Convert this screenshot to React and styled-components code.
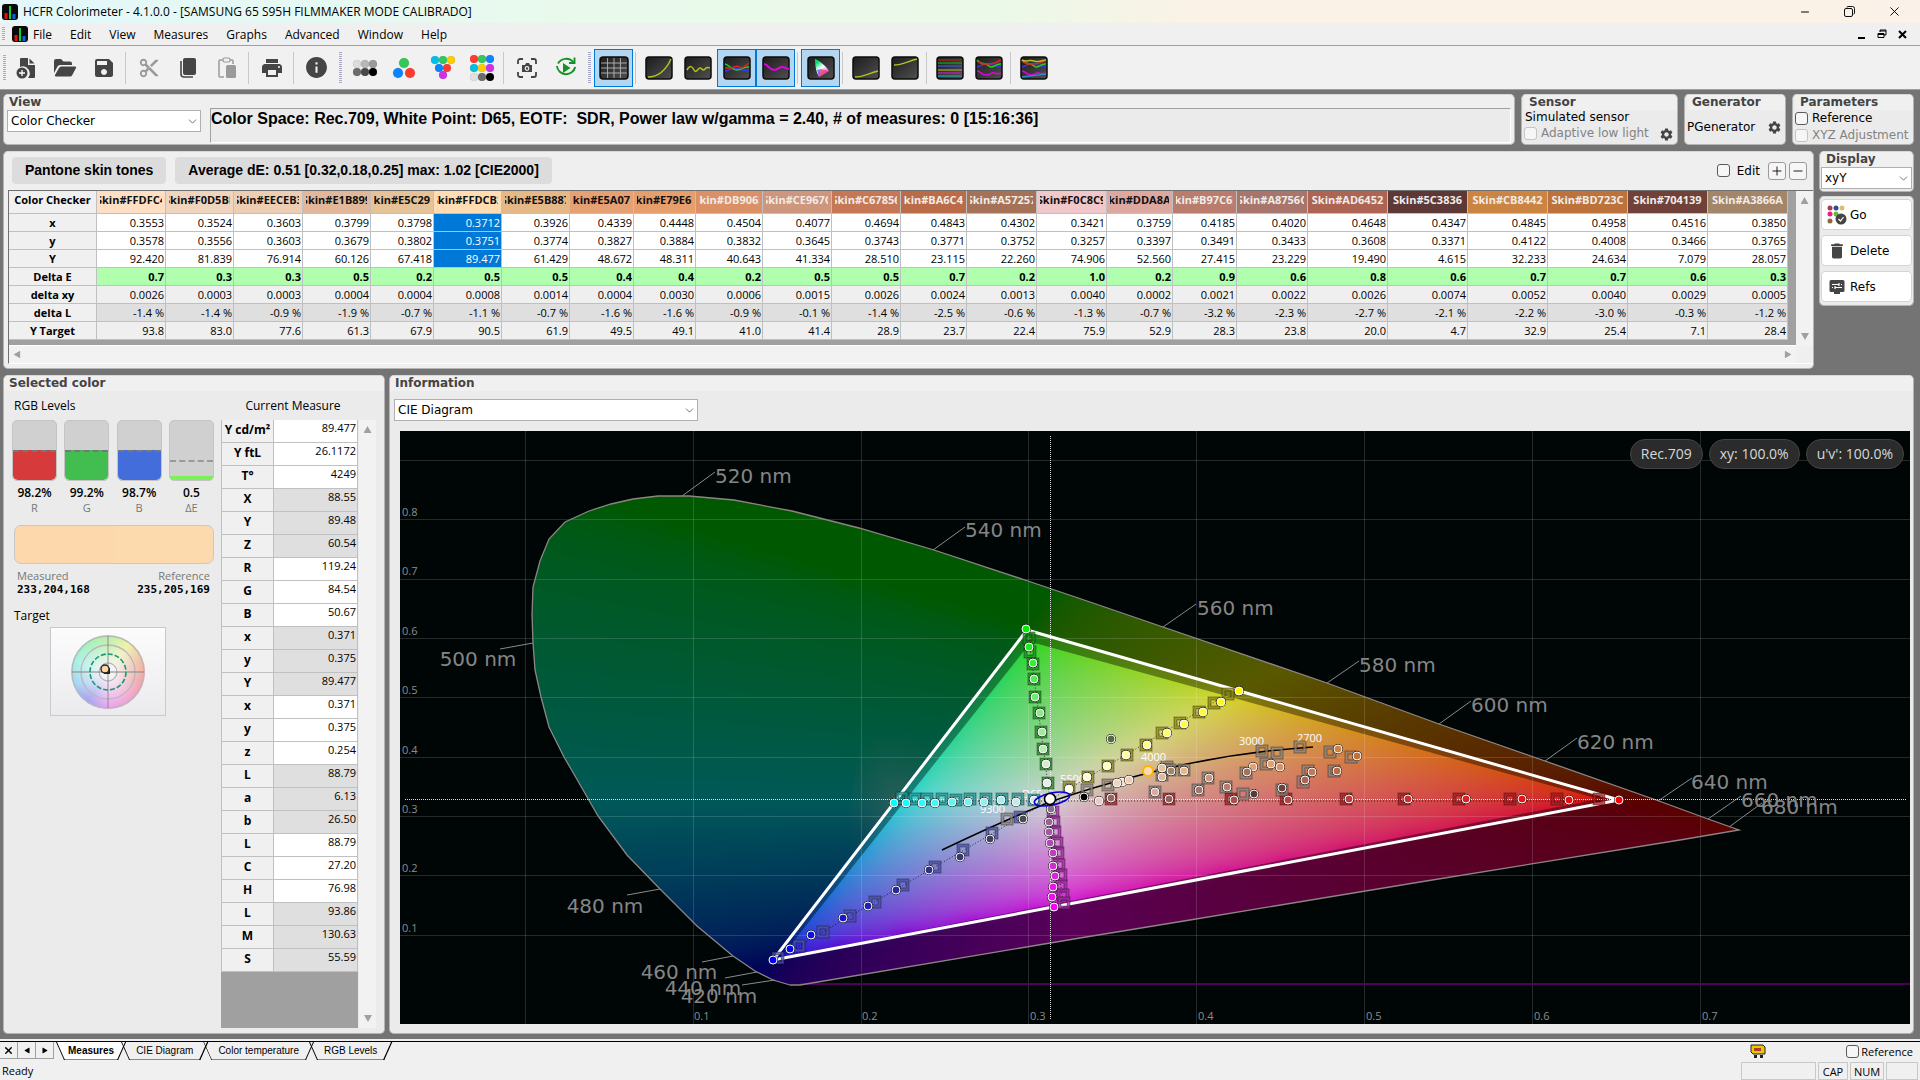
import React, {useState} from 'react';
import styled, {createGlobalStyle} from 'styled-components';
import {ChevronDown, Minus, Plus, X} from 'lucide-react';
import {MdSave, MdContentCut, MdPrint, MdInfo, MdDelete, MdSettings} from 'react-icons/md';

//--------------Data---------------
const menus = ['File', 'Edit', 'View', 'Measures', 'Graphs', 'Advanced', 'Window', 'Help'];

const patches = [
    ['Skin#FFDFC4', 69, '0.3553', '0.3578', '92.420', '0.7', '0.0026', '-1.4 %', '93.8'],
    ['Skin#F0D5BE', 68, '0.3524', '0.3556', '81.839', '0.3', '0.0003', '-1.4 %', '83.0'],
    ['Skin#EECEB3', 69, '0.3603', '0.3603', '76.914', '0.3', '0.0003', '-0.9 %', '77.6'],
    ['Skin#E1B899', 68, '0.3799', '0.3679', '60.126', '0.5', '0.0004', '-1.9 %', '61.3'],
    ['Skin#E5C298', 63, '0.3798', '0.3802', '67.418', '0.2', '0.0004', '-0.7 %', '67.9'],
    ['Skin#FFDCB2', 68, '0.3712', '0.3751', '89.477', '0.5', '0.0008', '-1.1 %', '90.5'],
    ['Skin#E5B887', 68, '0.3926', '0.3774', '61.429', '0.5', '0.0014', '-0.7 %', '61.9'],
    ['Skin#E5A073', 64, '0.4339', '0.3827', '48.672', '0.4', '0.0004', '-1.6 %', '49.5'],
    ['Skin#E79E6D', 62, '0.4448', '0.3884', '48.311', '0.4', '0.0030', '-1.6 %', '49.1'],
    ['Skin#DB9065', 67, '0.4504', '0.3832', '40.643', '0.2', '0.0006', '-0.9 %', '41.0'],
    ['Skin#CE967C', 69, '0.4077', '0.3645', '41.334', '0.5', '0.0015', '-0.1 %', '41.4'],
    ['Skin#C67856', 69, '0.4694', '0.3743', '28.510', '0.5', '0.0026', '-1.4 %', '28.9'],
    ['Skin#BA6C49', 66, '0.4843', '0.3771', '23.115', '0.7', '0.0024', '-2.5 %', '23.7'],
    ['Skin#A57257', 70, '0.4302', '0.3752', '22.260', '0.2', '0.0013', '-0.6 %', '22.4'],
    ['Skin#F0C8C9', 70, '0.3421', '0.3257', '74.906', '1.0', '0.0040', '-1.3 %', '75.9'],
    ['Skin#DDA8A0', 66, '0.3759', '0.3397', '52.560', '0.2', '0.0002', '-0.7 %', '52.9'],
    ['Skin#B97C6D', 64, '0.4185', '0.3491', '27.415', '0.9', '0.0021', '-3.2 %', '28.3'],
    ['Skin#A8756C', 71, '0.4020', '0.3433', '23.229', '0.6', '0.0022', '-2.3 %', '23.8'],
    ['Skin#AD6452', 80, '0.4648', '0.3608', '19.490', '0.8', '0.0026', '-2.7 %', '20.0'],
    ['Skin#5C3836', 80, '0.4347', '0.3371', '4.615', '0.6', '0.0074', '-2.1 %', '4.7'],
    ['Skin#CB8442', 80, '0.4845', '0.4122', '32.233', '0.7', '0.0052', '-2.2 %', '32.9'],
    ['Skin#BD723C', 80, '0.4958', '0.4008', '24.634', '0.7', '0.0040', '-3.0 %', '25.4'],
    ['Skin#704139', 80, '0.4516', '0.3466', '7.079', '0.6', '0.0029', '-0.3 %', '7.1'],
    ['Skin#A3866A', 80, '0.3850', '0.3765', '28.057', '0.3', '0.0005', '-1.2 %', '28.4'],
];
const gridRows = [
    {label: 'x', bg: '#fff'},
    {label: 'y', bg: '#fff'},
    {label: 'Y', bg: '#fff'},
    {label: 'Delta E', bg: '#afffaf', bold: true},
    {label: 'delta xy', bg: '#efefef'},
    {label: 'delta L', bg: '#dfdfdf'},
    {label: 'Y Target', bg: '#efefef'},
];
const measures = [
    ['Y cd/m²', '89.477'], ['Y ftL', '26.1172'], ['T°', '4249'],
    ['X', '88.55'], ['Y', '89.48'], ['Z', '60.54'],
    ['R', '119.24'], ['G', '84.54'], ['B', '50.67'],
    ['x', '0.371'], ['y', '0.375'], ['Y', '89.477'],
    ['x', '0.371'], ['y', '0.375'], ['z', '0.254'],
    ['L', '88.79'], ['a', '6.13'], ['b', '26.50'],
    ['L', '88.79'], ['C', '27.20'], ['H', '76.98'],
    ['L', '93.86'], ['M', '130.63'], ['S', '55.59'],
];
const levels = [
    {label: 'R', value: '98.2%', color: '#d63a3a'},
    {label: 'G', value: '99.2%', color: '#42bd50'},
    {label: 'B', value: '98.7%', color: '#436ddb'},
];

//--------------Chart data---------------
const LOCUS = 'M790 985 L773 980 L755 971 L733 956 L697 926 L660 889 L627 855 L598 816 L571 769 L564 757 L549 727 L541 697 L535 670 L533 643 L532 615 L533 587 L540 561 L549 539 L565 522 L589 511 L611 504 L633 499 L658 496 L689 496 L734 500 L792 511 L859 528 L934 550 L1028 581 L1090 602 L1163 627 L1327 683 L1439 724 L1545 761 L1659 801 L1708 819 L1739 830 L1680 840 L1420 882 L1190 920 L1080 938 L800 985 Z';
const GAMUT = 'M1027 630 L1619 800 L773 960 Z';
const INNER = 'M1031 642 L1599 799 L781 957 Z';

const waves = [
    ['520 nm', 682, 496, 715, 472, 715, 483],
    ['540 nm', 933, 550, 965, 527, 965, 537],
    ['560 nm', 1163, 627, 1196, 604, 1197, 615],
    ['580 nm', 1327, 683, 1359, 661, 1359, 672],
    ['600 nm', 1439, 724, 1471, 701, 1471, 712],
    ['620 nm', 1545, 761, 1577, 738, 1577, 749],
    ['640 nm', 1658, 801, 1692, 778, 1691, 789],
    ['660 nm', 1708, 819, 1741, 796, 1741, 807],
    ['680 nm', 1729, 827, 1762, 803, 1761, 814],
    ['500 nm', 533, 643, 500, 649, 478, 666],
    ['480 nm', 660, 889, 627, 895, 605, 913],
    ['460 nm', 733, 956, 702, 962, 679, 979],
    ['440 nm', 757, 972, 725, 978, 703, 995],
    ['420 nm', 775, 980, 742, 985, 719, 1003],
];
const temps = [['9300', 980, 813], ['D65', 1022, 798], ['5500', 1060, 783], ['4000', 1141, 761], ['3000', 1239, 745], ['2700', 1297, 742]];

const sweeps = [
    {
        from: [235, 235, 235], to: [0, 240, 0], square: '#1c8a1c',
        dots: [[1047, 783], [1046, 764], [1043, 749], [1042, 732], [1040, 713], [1035, 697], [1034, 679], [1033, 663], [1029, 647], [1026, 629]],
        squares: [[1029, 638], [1030, 652], [1033, 664], [1034, 679], [1035, 697], [1039, 713], [1041, 732], [1043, 749], [1046, 764], [1048, 783]],
    },
    {
        from: [255, 255, 240], to: [255, 250, 0], square: '#8c8417',
        dots: [[1069, 789], [1087, 777], [1107, 766], [1126, 755], [1147, 745], [1167, 733], [1184, 724], [1203, 712], [1221, 702], [1239, 691]],
        squares: [[1228, 694], [1214, 703], [1199, 712], [1180, 723], [1162, 733], [1146, 745], [1127, 755], [1108, 766], [1088, 777], [1069, 787]],
    },
    {
        from: [215, 232, 232], to: [0, 255, 255], square: '#219494',
        dots: [[1034, 800], [1016, 802], [1001, 800], [984, 802], [968, 802], [952, 802], [935, 803], [922, 803], [906, 803], [894, 803]],
        squares: [[902, 798], [915, 799], [927, 799], [942, 799], [956, 800], [970, 799], [986, 799], [1002, 799], [1018, 799], [1034, 800]],
    },
    {
        from: [140, 110, 140], to: [255, 0, 255], square: '#9c2a9c',
        dots: [[1051, 809], [1049, 822], [1049, 832], [1050, 843], [1053, 853], [1053, 866], [1055, 876], [1053, 887], [1052, 897], [1054, 907]],
        squares: [[1053, 812], [1054, 822], [1055, 832], [1057, 843], [1058, 853], [1059, 865], [1061, 875], [1061, 886], [1063, 895], [1064, 903]],
    },
    {
        from: [72, 72, 82], to: [0, 0, 255], square: '#4a50a0',
        dots: [[1023, 819], [990, 839], [960, 857], [929, 870], [896, 890], [868, 906], [843, 918], [811, 935], [790, 949], [773, 960]],
        squares: [[778, 958], [799, 946], [823, 932], [850, 916], [875, 902], [903, 885], [935, 867], [963, 850], [992, 833], [1020, 817]],
    },
    {
        from: [150, 100, 100], to: [255, 0, 0], square: '#a01c24',
        dots: [[1111, 798], [1169, 799], [1234, 800], [1288, 800], [1349, 799], [1408, 799], [1466, 799], [1522, 799], [1569, 800], [1619, 800]],
        squares: [[1111, 799], [1169, 799], [1231, 799], [1286, 799], [1346, 799], [1404, 799], [1459, 799], [1510, 799], [1557, 799], [1599, 799]],
    },
];
const skins = [
    [1111, 739, '#556b3a'], [1084, 797, '#000'], [1099, 801, '#f0c8c9'], [1122, 782, '#ffdfc4'], [1117, 783, '#f0d5be'],
    [1129, 780, '#eeceb3'], [1162, 768, '#e5c298'], [1162, 777, '#e1b899'], [1171, 771, '#a3866a'], [1184, 771, '#e5b887'],
    [1155, 792, '#dda8a0'], [1199, 790, '#a8756c'], [1209, 778, '#ce967c'], [1227, 787, '#b97c6d'], [1254, 794, '#5c3836'],
    [1282, 788, '#704139'], [1253, 767, '#e5a073'], [1247, 772, '#a57257'], [1271, 764, '#e79e6d'], [1280, 767, '#db9065'],
    [1305, 780, '#ad6452'], [1312, 772, '#c67856'], [1337, 771, '#ba6c49'], [1338, 749, '#cb8442'], [1357, 756, '#bd723c'],
];
const targets = [
    [1262, 751], [1277, 753], [1300, 747], [1330, 752], [1351, 757], [1334, 771], [1308, 771], [1303, 782], [1282, 790],
    [1266, 764], [1246, 773], [1243, 794], [1226, 787], [1198, 790], [1167, 767], [1162, 775], [1155, 792], [1108, 785],
    [1087, 790], [1007, 819], [1170, 770], [1184, 770], [1208, 778],
];

//----------------Colour of the chart at a point----------------
const colorAt = (px, py) => {
    const [gx, gy, rx, ry, bx, by] = [1027, 630, 1619, 800, 773, 960];
    const det = (ry - by) * (gx - bx) + (bx - rx) * (gy - by);
    const r = ((by - gy) * (px - bx) + (gx - bx) * (py - by)) / det;
    const g = ((ry - by) * (px - bx) + (bx - rx) * (py - by)) / det;
    const b = 1 - r - g;
    const lin = [r / 0.213, g / 0.382, b / 0.405].map((v) => Math.max(0, v));
    const top = Math.max(...lin);
    return `rgb(${lin.map((v) => Math.round(212 * Math.pow(v / top, 0.46))).join(',')})`;
};
const CELL = 12;
const cells = [];
for (let x = 510; x < 1764; x += CELL) {
    for (let y = 474; y < 1008; y += CELL) {
        cells.push({x, y, fill: colorAt(x + CELL / 2, y + CELL / 2)});
    }
}
const mix = (from, to, t) => `rgb(${from.map((v, i) => Math.round(v + (to[i] - v) * t)).join(',')})`;

const Dot = ({x, y, fill}) => (
    <g>
        <circle cx={x} cy={y} r="5" fill="#222" />
        <circle cx={x} cy={y} r="4" fill={fill} stroke="#fff" strokeWidth="1" />
    </g>
);
const Square = ({x, y, color}) => (
    <g fill="none">
        <rect x={x - 4.5} y={y - 4.5} width="9" height="9" stroke={color} strokeWidth="3" opacity="0.75" />
        <rect x={x - 6} y={y - 6} width="12" height="12" stroke="#000" strokeOpacity="0.35" />
        <rect x={x - 3} y={y - 3} width="6" height="6" stroke="#000" strokeOpacity="0.35" />
    </g>
);

const CieChart = () => (
    <Chart viewBox="400 431 1510 593" preserveAspectRatio="none" role="img" aria-label="CIE Diagram">
        <defs>
            <clipPath id="locus"><path d={LOCUS} /></clipPath>
            <filter id="soften" x="0" y="0" width="1" height="1" colorInterpolationFilters="sRGB">
                <feGaussianBlur stdDeviation="6" />
            </filter>
            <radialGradient id="glow">
                <stop offset="0" stopColor="#8a6a60" stopOpacity="0.7" />
                <stop offset="1" stopColor="#6a5a50" stopOpacity="0" />
            </radialGradient>
        </defs>
        <rect x="400" y="431" width="1510" height="593" fill="#000606" />
        <g clipPath="url(#locus)">
            <g filter="url(#soften)">
                {cells.map((c) => <rect key={`${c.x}-${c.y}`} x={c.x} y={c.y} width={CELL + 1} height={CELL + 1} fill={c.fill} />)}
            </g>
            <path d={`${LOCUS} ${GAMUT}`} fillRule="evenodd" fill="#000" fillOpacity="0.58" />
            <path d={`${GAMUT} ${INNER}`} fillRule="evenodd" fill="#000" fillOpacity="0.4" />
            <path d="M840 874 L860 740 L950 728 L926 756 Z" fill="url(#glow)" opacity="0.4" />
        </g>
        <g stroke="#fff" strokeOpacity="0.14">
            {[525, 693, 861, 1028, 1196, 1364, 1532, 1700].map((x) => <line key={x} x1={x + 0.5} x2={x + 0.5} y1="431" y2="1024" />)}
            {[460, 519, 579, 638, 697, 757, 816, 875, 935].map((y) => <line key={y} x1="400" x2="1910" y1={y + 0.5} y2={y + 0.5} />)}
        </g>
        <line x1="800" x2="1910" y1="984" y2="984" stroke="#4e0058" strokeWidth="2" />
        <path d={LOCUS} fill="none" stroke="#8c8484" strokeWidth="1.3" />
        <g stroke="#8a8a8a">
            {waves.map(([name, x1, y1, x2, y2]) => <line key={name} x1={x1} y1={y1} x2={x2} y2={y2} />)}
        </g>
        <path d={GAMUT} fill="none" stroke="#fff" strokeWidth="3" />
        <g stroke="#fff" strokeOpacity="0.85" strokeDasharray="1 1">
            <line x1="1050.5" x2="1050.5" y1="436" y2="1020" />
            <line x1="405" x2="1906" y1="799.5" y2="799.5" />
        </g>
        <g stroke="#000" strokeOpacity="0.7" strokeDasharray="1 2" fill="none">
            <path d="M894 801 L1600 801" />
            <path d="M1029 640 L1050 800 L1063 903" />
            <path d="M778 958 L1050 800 L1228 694" />
        </g>
        <path d="M942 850 Q1000 822 1050 802 Q1110 781 1187 764 Q1250 751 1313 747" fill="none" stroke="#000" strokeWidth="1.6" />
        <TempText>
            {temps.map(([name, x, y]) => <text key={name} x={x} y={y}>{name}</text>)}
        </TempText>
        {sweeps.map((s) => s.squares.map(([x, y]) => <Square key={`${x}-${y}`} x={x} y={y} color={s.square} />))}
        {targets.map(([x, y]) => <Square key={`${x}-${y}`} x={x} y={y} color="#8a8078" />)}
        {sweeps.map((s) => s.dots.map(([x, y], i) => <Dot key={`${x}-${y}`} x={x} y={y} fill={mix(s.from, s.to, i / 9)} />))}
        {skins.map(([x, y, c]) => <Dot key={`${x}-${y}`} x={x} y={y} fill={c} />)}
        <circle cx="1148" cy="771" r="5" fill="#ffdcb0" stroke="#ffb400" strokeWidth="2" />
        <ellipse cx="1052" cy="799" rx="18" ry="6" transform="rotate(-12 1052 799)" fill="none" stroke="#0000e0" strokeWidth="1.6" />
        <circle cx="1050" cy="799" r="5.5" fill="#fff" stroke="#000" strokeWidth="1.6" />
        <WaveText>
            {waves.map(([name, , , , , x, y], i) => <text key={name} x={x} y={y} textAnchor={i > 8 ? 'middle' : 'start'}>{name}</text>)}
        </WaveText>
        <AxisText>
            {['0.8', '0.7', '0.6', '0.5', '0.4', '0.3', '0.2', '0.1'].map((n, i) => <text key={n} x="402" y={516 + Math.round(i * 59.4)}>{n}</text>)}
            {['0.1', '0.2', '0.3', '0.4', '0.5', '0.6', '0.7'].map((n, i) => <text key={n} x={694 + i * 168} y="1020">{n}</text>)}
        </AxisText>
    </Chart>
);

//----------------Icons----------------
const AppIcon = () => (
    <svg width="16" height="16" viewBox="0 0 16 16">
        <rect width="16" height="16" rx="3" fill="#0a0a0a" />
        <path d="M4 9v6" stroke="#e01010" strokeWidth="3" />
        <path d="M8 2v13" stroke="#10d030" strokeWidth="2" />
        <path d="M12 10v5" stroke="#1060e0" strokeWidth="3" />
    </svg>
);
const NewIcon = () => (
    <svg width="20" height="22" viewBox="0 0 20 22" fill="#454545">
        <path d="M5 1h7v7h7v12a1 1 0 0 1-1 1h-6a7 7 0 0 0-8-11V2a1 1 0 0 1 1-1z" />
        <path d="M13.500 1.500l5 5h-5z" />
        <circle cx="6" cy="16" r="5.500" />
        <path d="M6 13v6M3 16h6" stroke="#fff" strokeWidth="1.300" />
    </svg>
);
const FolderIcon = () => (
    <svg width="24" height="20" viewBox="0 0 24 20" fill="#454545">
        <path d="M1 3a2 2 0 0 1 2-2h5l2.500 2.500H17a2 2 0 0 1 2 2V7H7a3 3 0 0 0-2.500 1.500L1 15z" />
        <path d="M7.500 8.500H22a1 1 0 0 1 1 1.500l-4 7.500a2 2 0 0 1-1.800 1H3a1 1 0 0 1-1-1.500l4-7a2 2 0 0 1 1.500-1z" />
    </svg>
);
const CopyIcon = () => (
    <svg width="18" height="22" viewBox="0 0 18 22">
        <rect x="4" y="1" width="13" height="17" rx="2" fill="#454545" />
        <path d="M2 4v13a3 3 0 0 0 3 3h9" fill="none" stroke="#454545" strokeWidth="1.600" />
    </svg>
);
const PasteIcon = () => (
    <svg width="20" height="22" viewBox="0 0 20 22">
        <path d="M6 3H3a1 1 0 0 0-1 1v15a1 1 0 0 0 1 1h4M13 3h2a1 1 0 0 1 1 1v3" fill="none" stroke="#9a9a9a" strokeWidth="1.500" />
        <rect x="6" y="1" width="7" height="4" rx="1.500" fill="#f0f0f0" stroke="#9a9a9a" strokeWidth="1.200" />
        <rect x="9" y="8" width="10" height="13" rx="1.500" fill="#9a9a9a" />
    </svg>
);
const DotsIcon = ({dots, r = 4}) => (
    <svg width="26" height="26" viewBox="0 0 26 26">
        {dots.map(([x, y, c]) => <circle key={`${x}-${y}`} cx={x} cy={y} r={r} fill={c} stroke="#0002" strokeWidth="0.500" />)}
    </svg>
);
const CameraIcon = () => (
    <svg width="22" height="22" viewBox="0 0 22 22" fill="none" stroke="#454545" strokeWidth="1.800">
        <path d="M2 7V4a2 2 0 0 1 2-2h3M15 2h3a2 2 0 0 1 2 2v3M20 15v3a2 2 0 0 1-2 2h-3M7 20H4a2 2 0 0 1-2-2v-3" />
        <path d="M6 8h3l1-2h3l1 2h2v7H6z" fill="#454545" stroke="none" />
        <circle cx="11" cy="11.500" r="1.800" stroke="#f0f0f0" strokeWidth="1.200" />
    </svg>
);
const RunIcon = () => (
    <svg width="24" height="24" viewBox="0 0 24 24" fill="none" stroke="#16912a" strokeWidth="1.900">
        <path d="M19.500 6.500A9.300 9.300 0 0 0 4 7.500" />
        <path d="M2.900 10A9.300 9.300 0 0 0 21.200 11" />
        <path d="M20.500 1.500v5.500H15" />
        <path d="M9 7l7.500 5L9 17z" fill="#16912a" stroke="none" />
    </svg>
);
const GraphIcon = ({children, wide}) => (
    <svg width={wide ? 30 : 28} height="24" viewBox="0 0 28 24" preserveAspectRatio="none" fill="none" strokeWidth="1.500">
        <defs>
            <linearGradient id="tile" x1="0" y1="0" x2="1" y2="1">
                <stop offset="0" stopColor="#1c1c1c" />
                <stop offset="1" stopColor="#505050" />
            </linearGradient>
        </defs>
        <rect x="1" y="1" width="26" height="22" rx="3" fill="url(#tile)" stroke="#0c0c0c" />
        {children}
    </svg>
);
const rgbLines = (
    <>
        <path d="M2 15c5 0 6-4 11-3s7 4 13 2" stroke="#3838f0" />
        <path d="M2 8c4 1 7 6 12 6s7-4 12-3" stroke="#20d020" />
        <path d="M2 12h6l6-2 5 2 7-5" stroke="#e02020" />
    </>
);
const multiLines = (
    <>
        <path d="M2 11c5-1 8-5 13-3s6 3 11 2" stroke="#3838f0" />
        <path d="M2 4c5 6 8 2 12 6s6-3 12-2" stroke="#20d020" />
        <path d="M2 5l5 3h7l6-1 6-3" stroke="#e02020" />
        <path d="M2 15c4 0 4 4 9 4s5-3 8-2 4 1 7 0" stroke="#e000e0" />
    </>
);
const Wheel = () => (
    <svg width="76" height="76" viewBox="0 0 76 76">
        <foreignObject x="1" y="1" width="74" height="74"><Hue /></foreignObject>
        <g fill="none" stroke="#b8b8bc" strokeWidth="1.300">
            <circle cx="38" cy="38" r="36" />
            <circle cx="38" cy="38" r="27" />
            <circle cx="38" cy="38" r="9" />
            <path d="M38 2v72M2 38h72" stroke="#888" strokeOpacity="0.7" />
            <circle cx="38" cy="38" r="18" stroke="#159a74" strokeDasharray="5 2" strokeWidth="1.600" />
        </g>
        <path d="M34 39h5v-5" stroke="#222" strokeWidth="2" fill="none" />
        <circle cx="35" cy="35" r="4" fill="#fdd6a6" stroke="#222" strokeWidth="1.400" />
    </svg>
);

const tools = [
    {name: 'New', icon: <NewIcon />},
    {name: 'Open', icon: <FolderIcon />},
    {name: 'Save', icon: <MdSave size={24} />},
    {sep: true},
    {name: 'Cut', icon: <MdContentCut size={22} color="#9a9a9a" />},
    {name: 'Copy', icon: <CopyIcon />},
    {name: 'Paste', icon: <PasteIcon />},
    {sep: true},
    {name: 'Print', icon: <MdPrint size={24} />},
    {sep: true},
    {name: 'About', icon: <MdInfo size={25} />},
    {grip: true},
    {name: 'Grey scale', icon: <DotsIcon dots={[[5, 9, '#dcdcdc'], [13, 9, '#b8b8b8'], [21, 9, '#9a9a9a'], [5, 17, '#6c6c6c'], [13, 17, '#484848'], [21, 17, '#000']]} />},
    {name: 'Primaries', icon: <DotsIcon r={5} dots={[[13, 8, '#34c759'], [7, 18, '#0a84ff'], [19, 18, '#ff3b30']]} />},
    {name: 'Secondaries', icon: <DotsIcon dots={[[5, 5, '#00bfe8'], [13, 5, '#34c759'], [21, 5, '#ffcc00'], [9, 13, '#0a84ff'], [17, 13, '#ff3b30'], [13, 20, '#d030e8']]} />},
    {name: 'All colors', icon: <DotsIcon dots={[[5, 4, '#ff3b30'], [13, 4, '#34c759'], [21, 4, '#0a84ff'], [5, 13, '#00c0e0'], [13, 13, '#ffcc00'], [21, 13, '#d030e8'], [5, 22, '#e0e0e0'], [13, 22, '#6c6c6c'], [21, 22, '#000']]} />},
    {sep: true},
    {name: 'Capture', icon: <CameraIcon />},
    {name: 'Continuous', icon: <RunIcon />},
    {grip: true},
    {name: 'Measures grid', on: true, icon: <GraphIcon wide><path d="M8 2v20M14 2v20M20 2v20M2 7h24M2 12h24M2 17h24" stroke="#b4b4b4" strokeWidth="0.900" /></GraphIcon>},
    {sep: true},
    {name: 'Luminance', icon: <GraphIcon><path d="M3 21c11 0 18-7 23-18" stroke="#b8c020" /></GraphIcon>},
    {name: 'Gamma', icon: <GraphIcon><path d="M3 14c3-5 5-4 7 0s4-2 6-2 3 4 5 1 3-1 5-1" stroke="#b8c020" /></GraphIcon>},
    {name: 'RGB', on: true, icon: <GraphIcon>{rgbLines}</GraphIcon>},
    {name: 'Temperature', on: true, icon: <GraphIcon><path d="M2 8c4 0 5 6 10 6s5-4 9-3 4 2 6 2" stroke="#e000e0" strokeWidth="2" /></GraphIcon>},
    {sep: true},
    {name: 'CIE', on: true, icon: <GraphIcon><path d="M8 3c4 1 12 8 14 12L12 21c-3-5-4-12-4-18z" fill="url(#mini)" /><path d="M22 15l-10 6 2-8z" fill="#f03050" fillOpacity="0.7" /><path d="M12 21l-2-7 4-1z" fill="#5040ff" fillOpacity="0.7" /><defs><linearGradient id="mini" x1="0" y1="0" x2="0.600" y2="1"><stop offset="0.200" stopColor="#00e070" /><stop offset="0.550" stopColor="#fff" /><stop offset="1" stopColor="#e040f0" /></linearGradient></defs></GraphIcon>},
    {sep: true},
    {name: 'Near black', icon: <GraphIcon><path d="M3 21c8 0 12-3 23-6" stroke="#b8c020" /></GraphIcon>},
    {name: 'Near white', icon: <GraphIcon><path d="M3 9c8 0 12-3 23-6" stroke="#b8c020" /></GraphIcon>},
    {sep: true},
    {name: 'Saturation', icon: <GraphIcon><g strokeWidth="1.600"><path d="M2 4h24" stroke="#902424" /><path d="M2 7h24" stroke="#208a20" /><path d="M2 10h24" stroke="#3050b0" /><path d="M2 14h24" stroke="#909024" /><path d="M2 17h24" stroke="#a028a0" /><path d="M2 20h24" stroke="#209090" /></g></GraphIcon>},
    {name: 'Combined', icon: <GraphIcon>{multiLines}</GraphIcon>},
    {sep: true},
    {name: 'All graphs', icon: <GraphIcon>{multiLines}<path d="M2 4c5 3 6-1 12 1s8-1 12-1" stroke="#b8c020" /><path d="M2 21l24-3" stroke="#2090c0" /></GraphIcon>},
];

const Dropdown = ({label, value}) => (
    <SelectBox>
        <select aria-label={label} defaultValue={value}><option>{value}</option></select>
        <ChevronDown size={13} strokeWidth={1.5} />
    </SelectBox>
);

function App() {
    const [tab, setTab] = useState('Measures');

  return (
    <Page>
        <GlobalStyle />
        <TitleBar>
            <AppIcon />
            <span>HCFR Colorimeter - 4.1.0.0 - [SAMSUNG 65 S95H FILMMAKER MODE CALIBRADO]</span>
            <WindowButtons>
                <button aria-label="Minimize"><Minus size={12} strokeWidth={2} /></button>
                <button aria-label="Restore">
                    <svg width="11" height="11" viewBox="0 0 11 11" fill="none" stroke="#111">
                        <rect x="0.500" y="2.500" width="8" height="8" rx="1.500" />
                        <path d="M3 1.500a1 1 0 0 1 1-1h4.500a2 2 0 0 1 2 2V7a1 1 0 0 1-1 1" />
                    </svg>
                </button>
                <button aria-label="Close"><X size={15} strokeWidth={1.5} /></button>
            </WindowButtons>
        </TitleBar>
        <MenuBar>
            <Grip />
            <AppIcon />
            {menus.map((m) => <button key={m}>{m}</button>)}
            <DocButtons>
                <button aria-label="Minimize document"><svg width="8" height="10"><path d="M0 9h7" stroke="#000" strokeWidth="2" /></svg></button>
                <button aria-label="Restore document">
                    <svg width="10" height="10" fill="none" stroke="#000"><path d="M3 3V1h6v5H7M3 2h6" /><path d="M1 4.500h6v4H1zM1 5.500h6" /></svg>
                </button>
                <button aria-label="Close document"><svg width="9" height="9"><path d="M1 1l7 7M8 1l-7 7" stroke="#000" strokeWidth="2" /></svg></button>
            </DocButtons>
        </MenuBar>
        <ToolBar>
            <Grip />
            {tools.map((t, i) => {
                if (t.sep) return <Separator key={i} />;
                if (t.grip) return <Grip key={i} $wide />;
                return <ToolButton key={i} $on={t.on} aria-label={t.name}>{t.icon}</ToolButton>;
            })}
        </ToolBar>

        <Workspace>
            <TopRow>
                <ViewPanel>
                    <ViewPick>
                        <PanelTitle>View</PanelTitle>
                        <Dropdown label="View" value="Color Checker" />
                    </ViewPick>
                    <InfoLine>Color Space: Rec.709, White Point: D65, EOTF:&nbsp; SDR, Power law w/gamma = 2.40, # of measures: 0 [15:16:36]</InfoLine>
                </ViewPanel>
                <SidePanel $width={157}>
                    <PanelTitle>Sensor</PanelTitle>
                    <SideLine>Simulated sensor</SideLine>
                    <SideRow>
                        <Check $off><input type="checkbox" disabled /><span>Adaptive low light</span></Check>
                        <IconButton aria-label="Sensor settings"><MdSettings size={15} /></IconButton>
                    </SideRow>
                </SidePanel>
                <SidePanel $width={102}>
                    <PanelTitle>Generator</PanelTitle>
                    <GeneratorRow>
                        <span>PGenerator</span>
                        <IconButton aria-label="Generator settings"><MdSettings size={15} /></IconButton>
                    </GeneratorRow>
                </SidePanel>
                <SidePanel $width={122}>
                    <PanelTitle>Parameters</PanelTitle>
                    <Check><input type="checkbox" /><span>Reference</span></Check>
                    <Check $off><input type="checkbox" disabled /><span>XYZ Adjustment</span></Check>
                </SidePanel>
            </TopRow>

            <MiddleRow>
                <GridPanel>
                    <GridHead>
                        <Chip>Pantone skin tones</Chip>
                        <Chip>Average dE: 0.51 [0.32,0.18,0.25] max: 1.02 [CIE2000]</Chip>
                        <EditTools>
                            <Check><input type="checkbox" /><span>Edit</span></Check>
                            <SmallButton aria-label="Add column"><Plus size={14} strokeWidth={1.5} /></SmallButton>
                            <SmallButton aria-label="Remove column"><Minus size={14} strokeWidth={1.5} /></SmallButton>
                        </EditTools>
                    </GridHead>
                    <GridFrame>
                        <GridScroll>
                            <DataTable>
                                <colgroup>
                                    <col width="88" />
                                    {patches.map((p) => <col key={p[0]} width={p[1]} />)}
                                </colgroup>
                                <thead>
                                    <tr>
                                        <Corner>Color Checker</Corner>
                                        {patches.map((p, i) => (
                                            <PatchHead key={p[0]} $color={p[0].slice(4)} $light={(i > 8 && i < 14) || i > 15}>
                                                <div><span>{p[0]}</span></div>
                                            </PatchHead>
                                        ))}
                                    </tr>
                                </thead>
                                <tbody>
                                    {gridRows.map((row, r) => (
                                        <tr key={row.label}>
                                            <RowHead>{row.label}</RowHead>
                                            {patches.map((p, i) => (
                                                <Cell key={p[0]} $bg={row.bg} $bold={row.bold} $selected={i === 5 && r < 3}>{p[r + 2]}</Cell>
                                            ))}
                                        </tr>
                                    ))}
                                </tbody>
                            </DataTable>
                        </GridScroll>
                        <ScrollV><Arrow $dir="up" /><Arrow $dir="down" /></ScrollV>
                        <ScrollH><Arrow $dir="left" /><Arrow $dir="right" /></ScrollH>
                    </GridFrame>
                </GridPanel>
                <Actions>
                    <DisplayPanel>
                        <PanelTitle>Display</PanelTitle>
                        <Dropdown label="Display" value="xyY" />
                    </DisplayPanel>
                    <ActionPanel>
                        <ActionButton>
                            <svg width="20" height="20" viewBox="0 0 20 20">
                                <circle cx="3" cy="3" r="2.500" fill="#b03a48" /><circle cx="9" cy="3" r="2.500" fill="#2a4a9a" /><circle cx="15" cy="3" r="2.500" fill="#d8c070" />
                                <circle cx="3" cy="9" r="2.500" fill="#e8208a" /><circle cx="9" cy="9" r="2.500" fill="#60c030" /><circle cx="3" cy="16" r="2.500" fill="#8a6a3a" />
                                <circle cx="14" cy="14" r="5.500" fill="#454545" /><path d="M11.500 14l2 2 3-4" stroke="#fff" strokeWidth="1.200" fill="none" />
                            </svg>
                            Go
                        </ActionButton>
                        <ActionButton><MdDelete size={20} color="#454545" />Delete</ActionButton>
                        <ActionButton>
                            <svg width="20" height="18" viewBox="0 0 20 18">
                                <path d="M4 2h12a1.500 1.500 0 0 1 1.500 1.500v9A1.500 1.500 0 0 1 16 14h-3v2H7v-2H4a1.500 1.500 0 0 1-1.500-1.500v-9A1.500 1.500 0 0 1 4 2z" fill="#454545" />
                                <path d="M5 6.500h7M14 6.500h1M5 9.500h1M8 9.500h7M12 5v3M8 8v3" stroke="#fff" strokeWidth="1.200" />
                            </svg>
                            Refs
                        </ActionButton>
                    </ActionPanel>
                </Actions>
            </MiddleRow>

            <BottomRow>
                <SelectedPanel>
                    <PanelTitle>Selected color</PanelTitle>
                    <SelectedBody>
                        <SelectedLeft>
                            <Label>RGB Levels</Label>
                            <Bars>
                                {levels.map((l) => (
                                    <Bar key={l.label}>
                                        <Tube><Fill $color={l.color} /></Tube>
                                        <b>{l.value}</b>
                                        <small>{l.label}</small>
                                    </Bar>
                                ))}
                                <Bar>
                                    <Tube><DashLine /><DeltaFill /></Tube>
                                    <b>0.5</b>
                                    <small>ΔE</small>
                                </Bar>
                            </Bars>
                            <Swatch />
                            <Compare>
                                <div><small>Measured</small><code>233,204,168</code></div>
                                <div><small>Reference</small><code>235,205,169</code></div>
                            </Compare>
                            <Label>Target</Label>
                            <TargetBox><Wheel /></TargetBox>
                        </SelectedLeft>
                        <MeasureColumn>
                            <MeasureTitle>Current Measure</MeasureTitle>
                            <MeasureFrame>
                                <MeasureScroll>
                                    <MeasureTable>
                                        <tbody>
                                            {measures.map(([name, value], i) => (
                                                <MeasureRow key={i} $grey={Math.floor(i / 3) % 2 === 1}>
                                                    <th>{name}</th>
                                                    <td>{value}</td>
                                                </MeasureRow>
                                            ))}
                                        </tbody>
                                    </MeasureTable>
                                </MeasureScroll>
                                <ScrollV><Arrow $dir="up" /><Arrow $dir="down" /></ScrollV>
                            </MeasureFrame>
                        </MeasureColumn>
                    </SelectedBody>
                </SelectedPanel>
                <InfoPanel>
                    <PanelTitle>Information</PanelTitle>
                    <InfoBody>
                        <InfoPick><Dropdown label="Information" value="CIE Diagram" /></InfoPick>
                        <ChartFrame>
                            <CieChart />
                            <Badges>
                                <span>Rec.709</span>
                                <span>xy: 100.0%</span>
                                <span>u'v': 100.0%</span>
                            </Badges>
                        </ChartFrame>
                    </InfoBody>
                </InfoPanel>
            </BottomRow>
        </Workspace>

        <TabBar>
            <TabNav>
                <button aria-label="Close tab"><X size={11} strokeWidth={3} /></button>
                <button aria-label="Previous"><Arrow $dir="left" $dark /></button>
                <button aria-label="Next"><Arrow $dir="right" $dark /></button>
            </TabNav>
            {['Measures', 'CIE Diagram', 'Color temperature', 'RGB Levels'].map((t) => (
                <Tab key={t} $active={t === tab} onClick={() => setTab(t)}>{t}</Tab>
            ))}
            <TabRight>
                <svg width="16" height="16" viewBox="0 0 16 16">
                    <path d="M1 2h12l2 2v7H3L1 9z" fill="#e8c800" stroke="#222" />
                    <path d="M4 5h7v3H4z" fill="#b04020" />
                    <path d="M4 12h3v3H4zM10 12h3v3h-3z" fill="#222" />
                </svg>
                <Check $small><input type="checkbox" /><span>Reference</span></Check>
            </TabRight>
        </TabBar>
        <StatusBar>
            <span>Ready</span>
            <Slot $width={75} />
            <Slot $width={30}>CAP</Slot>
            <Slot $width={34}>NUM</Slot>
            <Slot $width={32} />
        </StatusBar>
    </Page>
  )
}

export default App;

const GlobalStyle = createGlobalStyle`
    * {
        box-sizing: border-box;
    }
    body {
        margin: 0;
        font-family: "Open Sans", "Noto Sans", sans-serif;
        font-size: 12px;
        color: #000;
        background: #f0f0f0;
    }
    button, select, input {
        font: inherit;
        color: inherit;
        margin: 0;
        padding: 0;
    }
    button {
        border: none;
        background: none;
    }
`;
const Page = styled.div`
    min-height: 100vh;
    display: flex;
    flex-direction: column;
`;
const TitleBar = styled.header`
    height: 23px;
    display: flex;
    align-items: center;
    gap: 5px;
    padding-left: 2px;
    background: linear-gradient(90deg, #e2f8fb 0%, #e9f9ec 30%, #ebf9e8 52%, #faf2e6 62%, #faf2e8 100%);
`;
const WindowButtons = styled.div`
    display: flex;
    margin-left: auto;
    padding-right: 3px;
    button {
        width: 45px;
        height: 22px;
        display: flex;
        align-items: center;
        justify-content: center;
    }
`;
const MenuBar = styled.nav`
    height: 23px;
    display: flex;
    align-items: center;
    padding-left: 2px;
    border-bottom: 1px solid #a0a0a0;
    > svg {
        margin: 0 0 0 7px;
    }
    > button {
        padding: 0 9px;
        height: 20px;
    }
    > svg + button {
        padding-left: 5px;
    }
`;
const DocButtons = styled.div`
    display: flex;
    align-items: center;
    gap: 11px;
    margin-left: auto;
    padding-right: 13px;
    button {
        display: flex;
    }
`;
const Grip = styled.i`
    width: ${({$wide}) => ($wide ? '9px' : '3px')};
    height: ${({$wide}) => ($wide ? '31px' : '60%')};
    background: repeating-linear-gradient(#a8a8cc 0 1px, transparent 1px 2px) center / 3px 100% no-repeat;
`;
const ToolBar = styled.div`
    height: 44px;
    display: flex;
    align-items: center;
    padding-left: 3px;
    background: #f1f1f1;
    border-bottom: 1px solid #a0a0a0;
`;
const ToolButton = styled.button`
    width: 39px;
    height: 38px;
    display: flex;
    align-items: center;
    justify-content: center;
    color: #454545;
    background: ${({$on}) => ($on ? '#b3d6f2' : 'transparent')};
    border: 1px solid ${({$on}) => ($on ? '#0078d7' : 'transparent')};
`;
const Separator = styled.i`
    width: 1px;
    height: 32px;
    margin: 0 3px 0 2px;
    background: #c8c8c8;
`;

const Workspace = styled.main`
    flex: 1;
    display: flex;
    flex-direction: column;
    gap: 6px;
    padding: 4px 6px 5px 3px;
    background: #747474;
`;
const Panel = styled.section`
    background: #ebebeb;
    border: 1px solid #b4b4b4;
    border-top-color: #d8d8d8;
    border-radius: 5px;
    overflow: hidden;
`;
const PanelTitle = styled.h2`
    margin: 0;
    padding: 0 5px;
    height: 15px;
    font: bold 12px/15px "DejaVu Sans", sans-serif;
    color: #444;
    background: #f0f0f0;
`;
const TopRow = styled.div`
    height: 51px;
    display: flex;
    gap: 6px;
`;
const ViewPanel = styled(Panel)`
    flex: 1;
    display: flex;
    gap: 9px;
    background: #efefef;
`;
const ViewPick = styled.div`
    width: 197px;
    > div {
        margin-left: 3px;
    }
`;
const InfoLine = styled.p`
    flex: 1;
    margin: 13px 3px 1px 0;
    font: bold 16px/19px "Liberation Sans", sans-serif;
    background: #ebebeb;
    border: 1px solid #a0a0a0;
    border-right-color: #fff;
    border-bottom-color: #fff;
    white-space: nowrap;
    overflow: hidden;
`;
const SelectBox = styled.div`
    position: relative;
    height: 22px;
    font: 12px "DejaVu Sans", sans-serif;
    select {
        width: 100%;
        height: 100%;
        padding: 0 20px 0 3px;
        appearance: none;
        background: #fff;
        border: 1px solid #b0b0b0;
        border-radius: 0;
    }
    svg {
        position: absolute;
        right: 2px;
        top: 5px;
        color: #555;
        pointer-events: none;
    }
`;
const SidePanel = styled(Panel)`
    width: ${({$width}) => $width}px;
    padding-left: 2px;
    font: 12px/17px "DejaVu Sans", sans-serif;
    white-space: nowrap;
`;
const SideLine = styled.div`
    padding-left: 1px;
    height: 15px;
    line-height: 15px;
`;
const SideRow = styled.div`
    display: flex;
    justify-content: space-between;
    padding-right: 2px;
    label {
        overflow: hidden;
    }
`;
const GeneratorRow = styled.div`
    display: flex;
    align-items: center;
    justify-content: space-between;
    height: 34px;
    padding-right: 2px;
`;
const IconButton = styled.button`
    width: 18px;
    height: 18px;
    display: flex;
    align-items: center;
    justify-content: center;
    color: #454545;
    flex-shrink: 0;
`;
const Check = styled.label`
    display: flex;
    align-items: center;
    gap: ${({$small}) => ($small ? '2px' : '4px')};
    height: 17px;
    font-family: ${({$small}) => ($small ? '"Open Sans", sans-serif' : '"DejaVu Sans", sans-serif')};
    font-size: ${({$small}) => ($small ? '11px' : '12px')};
    color: ${({$off}) => ($off ? '#838383' : '#000')};
    input {
        appearance: none;
        width: 13px;
        height: 13px;
        flex-shrink: 0;
        background: #f6f6f6;
        border: 1px solid ${({$off}) => ($off ? '#c4c4c4' : '#5a5a5a')};
        border-radius: 3px;
    }
`;
const MiddleRow = styled.div`
    display: flex;
    gap: 5px;
    align-items: flex-start;
`;
const GridPanel = styled(Panel)`
    flex: 1;
    min-width: 0;
    padding: 5px 0 4px 4px;
    background: #efefef;
`;
const GridHead = styled.div`
    display: flex;
    gap: 9px;
    height: 33px;
    padding: 0 6px 6px 4px;
`;
const Chip = styled.div`
    padding: 0 13px;
    font: bold 14px/27px "Liberation Sans", sans-serif;
    background: #dcdcdc;
    border-radius: 4px;
`;
const EditTools = styled.div`
    display: flex;
    align-items: center;
    gap: 3px;
    margin-left: auto;
    label {
        margin-right: 5px;
        gap: 7px;
    }
`;
const SmallButton = styled.button`
    width: 18px;
    height: 18px;
    display: flex;
    align-items: center;
    justify-content: center;
    border: 1px solid #9a9a9a;
    border-radius: 3px;
    background: #f6f6f6;
`;
const GridFrame = styled.div`
    display: grid;
    grid-template-columns: minmax(0, 1fr) 17px;
    grid-template-rows: 155px 17px;
    border: 1px solid #707070;
    border-right: none;
    border-bottom-color: #fff;
`;
const GridScroll = styled.div`
    overflow: hidden;
    background: #a0a0a0;
    border-bottom: 1px solid #fff;
`;
const DataTable = styled.table`
    table-layout: fixed;
    width: 1779px;
    border-collapse: separate;
    border-spacing: 0;
    font-size: 11px;
    th, td {
        height: 18px;
        padding: 0 1px;
        line-height: 17px;
        border-right: 1px solid #c0c0c0;
        border-bottom: 1px solid #c0c0c0;
        white-space: nowrap;
        overflow: hidden;
    }
    thead th {
        height: 23px;
        padding-bottom: 5px;
    }
`;
const Corner = styled.th`
    background: #f0f0f0;
`;
const PatchHead = styled.th`
    background: ${({$color}) => $color};
    color: ${({$light}) => ($light ? '#f0ece8' : '#111')};
    div {
        display: flex;
        justify-content: center;
        overflow: hidden;
        margin: 0 2px;
    }
`;
const RowHead = styled.th`
    background: #f0f0f0;
`;
const Cell = styled.td`
    text-align: right;
    background: ${({$bg, $selected}) => ($selected ? '#0078d7' : $bg)};
    color: ${({$selected}) => ($selected ? '#fff' : '#000')};
    font-weight: ${({$bold}) => ($bold ? 'bold' : 'normal')};
`;
const ScrollV = styled.div`
    display: flex;
    flex-direction: column;
    justify-content: space-between;
    align-items: center;
    width: 17px;
    padding: 6px 0;
    background: #f2f2f2;
`;
const ScrollH = styled.div`
    display: flex;
    justify-content: space-between;
    align-items: center;
    padding: 0 4px;
    background: #f2f2f2;
`;
const turns = {up: '0deg', right: '90deg', down: '180deg', left: '270deg'};
const Arrow = styled.i`
    width: 8px;
    height: 7px;
    background: ${({$dark}) => ($dark ? '#000' : '#a0a0a0')};
    clip-path: polygon(50% 0, 100% 100%, 0 100%);
    rotate: ${({$dir}) => turns[$dir]};
    scale: ${({$dark}) => ($dark ? 0.8 : 1)};
`;
const Actions = styled.div`
    width: 95px;
    display: flex;
    flex-direction: column;
    gap: 4px;
`;
const DisplayPanel = styled(Panel)`
    height: 41px;
    padding: 0 1px;
`;
const ActionPanel = styled(Panel)`
    display: flex;
    flex-direction: column;
    gap: 5px;
    padding: 2px 1px 3px;
`;
const ActionButton = styled.button`
    height: 31px;
    display: flex;
    align-items: center;
    gap: 3px;
    padding-left: 5px;
    font: 12px "DejaVu Sans", sans-serif;
    background: #fff;
    border: 1px solid #d4d4d4;
    border-radius: 4px;
`;

const BottomRow = styled.div`
    flex: 1;
    display: flex;
    gap: 4px;
`;
const SelectedPanel = styled(Panel)`
    width: 382px;
    display: flex;
    flex-direction: column;
`;
const SelectedBody = styled.div`
    flex: 1;
    display: flex;
    gap: 7px;
    padding: 7px 8px 5px;
`;
const SelectedLeft = styled.div`
    width: 203px;
`;
const Label = styled.div`
    padding-left: 2px;
    font-size: 12px;
    line-height: 16px;
`;
const Bars = styled.div`
    display: flex;
    justify-content: space-between;
    margin-top: 6px;
`;
const Bar = styled.div`
    width: 45px;
    display: flex;
    flex-direction: column;
    align-items: center;
    b {
        margin-top: 4px;
        font-size: 12px;
        font-weight: 600;
        line-height: 15px;
    }
    small {
        font-size: 11px;
        line-height: 15px;
        color: #777;
    }
`;
const Tube = styled.div`
    width: 45px;
    height: 61px;
    display: flex;
    flex-direction: column;
    justify-content: flex-end;
    background: #d0d0d0;
    border: 1px solid #c4c4c4;
    border-radius: 5px;
    overflow: hidden;
`;
const Fill = styled.div`
    height: 51%;
    background: ${({$color}) => $color};
    border-top: 2px dashed #777;
    border-radius: 0 0 5px 5px;
`;
const DashLine = styled.div`
    border-top: 2px dashed #999;
    margin-bottom: 14px;
`;
const DeltaFill = styled.div`
    height: 4px;
    background: #7cf05a;
`;
const Swatch = styled.div`
    height: 39px;
    margin: 10px 0 0 2px;
    background: linear-gradient(90deg, #fdd8ac 50%, #fddaae 50%);
    border: 1px solid #c8c8c8;
    border-radius: 7px;
`;
const Compare = styled.div`
    display: flex;
    justify-content: space-between;
    margin: 5px 4px 12px 5px;
    div {
        display: flex;
        flex-direction: column;
    }
    div + div {
        align-items: flex-end;
    }
    small {
        font-size: 11px;
        line-height: 14px;
        color: #777;
    }
    code {
        font: bold 11px/13px "DejaVu Sans Mono", monospace;
    }
`;
const TargetBox = styled.div`
    width: 116px;
    height: 89px;
    margin: 3px 0 0 38px;
    display: flex;
    align-items: center;
    justify-content: center;
    background: linear-gradient(#fcfcfd, #ebebee);
    border: 1px solid #c8c8d0;
`;
const Hue = styled.div`
    width: 74px;
    height: 74px;
    border-radius: 50%;
    background: radial-gradient(#f4f4f6 10%, #f4f4f600 80%), conic-gradient(from 0deg, #a8f090, #f0f090, #f0b090, #f09098, #f090c8, #e890f0, #9090f0, #90d0f0, #90f0e0, #90f0b0, #a8f090);
`;
const MeasureColumn = styled.div`
    flex: 1;
    display: flex;
    flex-direction: column;
`;
const MeasureTitle = styled.div`
    width: 144px;
    margin-bottom: 6px;
    text-align: center;
    font-size: 12px;
    line-height: 16px;
`;
const MeasureFrame = styled.div`
    flex: 1;
    display: flex;
    gap: 1px;
`;
const MeasureScroll = styled.div`
    width: 137px;
    background: #a0a0a0;
`;
const MeasureTable = styled.table`
    width: 100%;
    border-collapse: separate;
    border-spacing: 0;
    font-size: 12px;
    th, td {
        height: 23px;
        padding: 0;
        line-height: 16px;
        border-right: 1px solid #c0c0c0;
        border-bottom: 1px solid #c0c0c0;
    }
    th {
        width: 53px;
        padding-bottom: 3px;
        border-left: 1px solid #c0c0c0;
        background: #f0f0f0;
    }
    td {
        padding: 0 1px 6px 0;
        text-align: right;
        font-size: 11px;
    }
`;
const MeasureRow = styled.tr`
    td {
        background: ${({$grey}) => ($grey ? '#dfdfdf' : '#fff')};
    }
`;
const InfoPanel = styled(Panel)`
    flex: 1;
    display: flex;
    flex-direction: column;
`;
const InfoBody = styled.div`
    flex: 1;
    display: flex;
    flex-direction: column;
    padding: 8px 3px 9px 4px;
`;
const InfoPick = styled.div`
    width: 304px;
    margin-bottom: 10px;
`;
const ChartFrame = styled.div`
    position: relative;
    flex: 1;
    margin-left: 6px;
`;
const Chart = styled.svg`
    position: absolute;
    inset: 0;
    width: 100%;
    height: 100%;
`;
const WaveText = styled.g`
    font: 20px "DejaVu Sans", sans-serif;
    fill: #858585;
`;
const AxisText = styled.g`
    font-size: 11px;
    fill: #8c8c8c;
`;
const TempText = styled.g`
    font-size: 11px;
    fill: #fff;
`;
const Badges = styled.div`
    position: absolute;
    top: 8px;
    right: 6px;
    display: flex;
    gap: 6px;
    span {
        padding: 0 10px;
        font-size: 14px;
        line-height: 28px;
        color: #d8d8d8;
        background: #2b2b2b;
        border: 1px solid #444;
        border-radius: 15px;
    }
`;

const TabBar = styled.div`
    height: 21px;
    display: flex;
    padding-bottom: 2px;
    border-top: 1px solid #000;
    margin-top: 2px;
    font: 10px "Liberation Sans", sans-serif;
`;
const TabNav = styled.div`
    display: flex;
    margin-right: 2px;
    button {
        width: 18px;
        height: 17px;
        display: flex;
        align-items: center;
        justify-content: center;
        border-right: 1px solid #a0a0a0;
        border-bottom: 1px solid #a0a0a0;
    }
`;
const Tab = styled.button`
    position: relative;
    height: 18px;
    padding: 0 ${({$active}) => ($active ? '12px' : '15px')};
    font-weight: ${({$active}) => ($active ? 'bold' : 'normal')};
    background: ${({$active}) => ($active ? '#fff' : 'transparent')};
    border-bottom: 1px solid #888;
    clip-path: polygon(0 0, 100% 0, calc(100% - 8px) 100%, 8px 100%);
    margin-right: -5px;
    &::before, &::after {
        content: "";
        position: absolute;
        top: 0;
        bottom: -1px;
        left: 3px;
        border-left: 2px solid #000;
        transform: skewX(24deg);
    }
    &::after {
        left: auto;
        right: 3px;
        transform: skewX(-24deg);
    }
`;
const TabRight = styled.div`
    display: flex;
    align-items: center;
    gap: 80px;
    margin-left: auto;
    padding-right: 7px;
`;
const StatusBar = styled.footer`
    height: 18px;
    display: flex;
    gap: 2px;
    padding: 0 2px;
    font-size: 11px;
    line-height: 17px;
    > span {
        flex: 1;
    }
`;
const Slot = styled.div`
    width: ${({$width}) => $width}px;
    text-align: center;
    border: 1px solid #c8c8c8;
`;
